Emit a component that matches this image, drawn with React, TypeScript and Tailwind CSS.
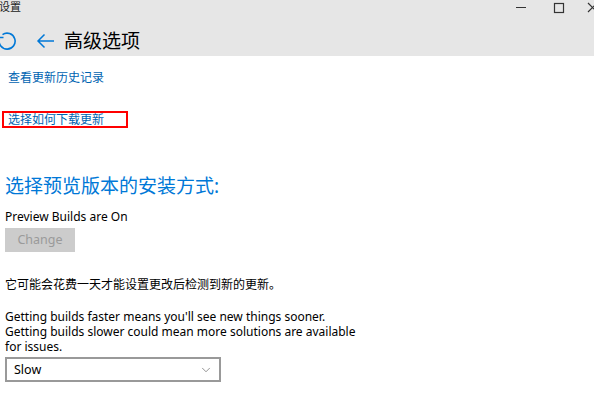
import { ChevronDown } from 'lucide-react'

const font = { fontFamily: '"Noto Sans", "Noto Sans CJK SC", sans-serif' }

export default function App() {
  return (
    <main className="w-[594px] h-[402px] overflow-hidden bg-white text-black" style={font}>
      {/* Header */}
      <div className="bg-[#e6e6e6] h-[56px] relative">
        <div className="flex items-start justify-between h-[14px]">
          <span className="text-[11px] leading-[13px] text-[#222] -ml-[1px]">设置</span>
          <div className="flex items-center text-[#333] -mr-[4px]">
            <svg width="46" height="14" viewBox="0 0 46 14"><path d="M20 7.5h10" stroke="currentColor" strokeWidth="1" /></svg>
            <svg width="34" height="14" viewBox="0 0 34 14"><rect x="12.5" y="3.5" width="9" height="9" fill="none" stroke="currentColor" strokeWidth="1.2" /></svg>
            <svg width="22" height="14" viewBox="0 0 22 14"><path d="M12 3l9 9M21 3l-9 9" stroke="currentColor" strokeWidth="1.2" /></svg>
          </div>
        </div>
        <div className="flex items-center h-[38px] mt-[8px]">
          <svg width="20" height="20" viewBox="0 0 20 20" className="-ml-[3px] text-[#0078d7]">
            <path d="M5.5 3.6A8 8 0 1 1 2.4 8" fill="none" stroke="currentColor" strokeWidth="1.6" />
            <path d="M1.5 1.5v5h5" fill="none" stroke="currentColor" strokeWidth="1.6" />
          </svg>
          <svg width="20" height="16" viewBox="0 0 20 16" className="ml-[19px] text-[#0078d7]">
            <path d="M18 8H2M8.5 1.5L2 8l6.5 6.5" fill="none" stroke="currentColor" strokeWidth="1.5" />
          </svg>
          <h1 className="ml-[8px] text-[19px] leading-[24px] text-black">高级选项</h1>
        </div>
      </div>

      {/* Links */}
      <div className="pt-[8px] pl-[8px]">
        <a className="text-[12px] leading-[16px] text-[#0063b1]">查看更新历史记录</a>
      </div>
      <div className="mt-[23px] ml-[2px] w-[126px] h-[17px] border-2 border-[#ff0000] flex items-center pl-[4px]">
        <a className="text-[12px] leading-[14px] text-[#0063b1]">选择如何下载更新</a>
      </div>

      {/* Preview section */}
      <div className="pl-[5px]">
        <h2 className="mt-[46px] text-[19px] leading-[24px] text-[#0078d7]">选择预览版本的安装方式:</h2>
        <p className="mt-[10px] text-[12px] leading-[18px]">Preview Builds are On</p>
        <button className="block mt-[2px] w-[70px] h-[24px] bg-[#cccccc] text-[#9a9a9a] text-[12.5px] leading-[18px]">Change</button>
        <p className="mt-[25px] text-[12px] leading-[16px]">它可能会花费一天才能设置更改后检测到新的更新。</p>
        <p className="mt-[16px] text-[12px] leading-[15px] w-[360px]">
          Getting builds faster means you'll see new things sooner.<br />
          Getting builds slower could mean more solutions are available<br />
          for issues.
        </p>
        <div className="mt-[3px] w-[216px] h-[25px] border-2 border-[#999999] flex items-center justify-between pl-[7px] pr-[6px]">
          <span className="text-[12.5px] leading-[18px]">Slow</span>
          <ChevronDown size={14} strokeWidth={1.2} className="text-[#666]" />
        </div>
      </div>
    </main>
  )
}
